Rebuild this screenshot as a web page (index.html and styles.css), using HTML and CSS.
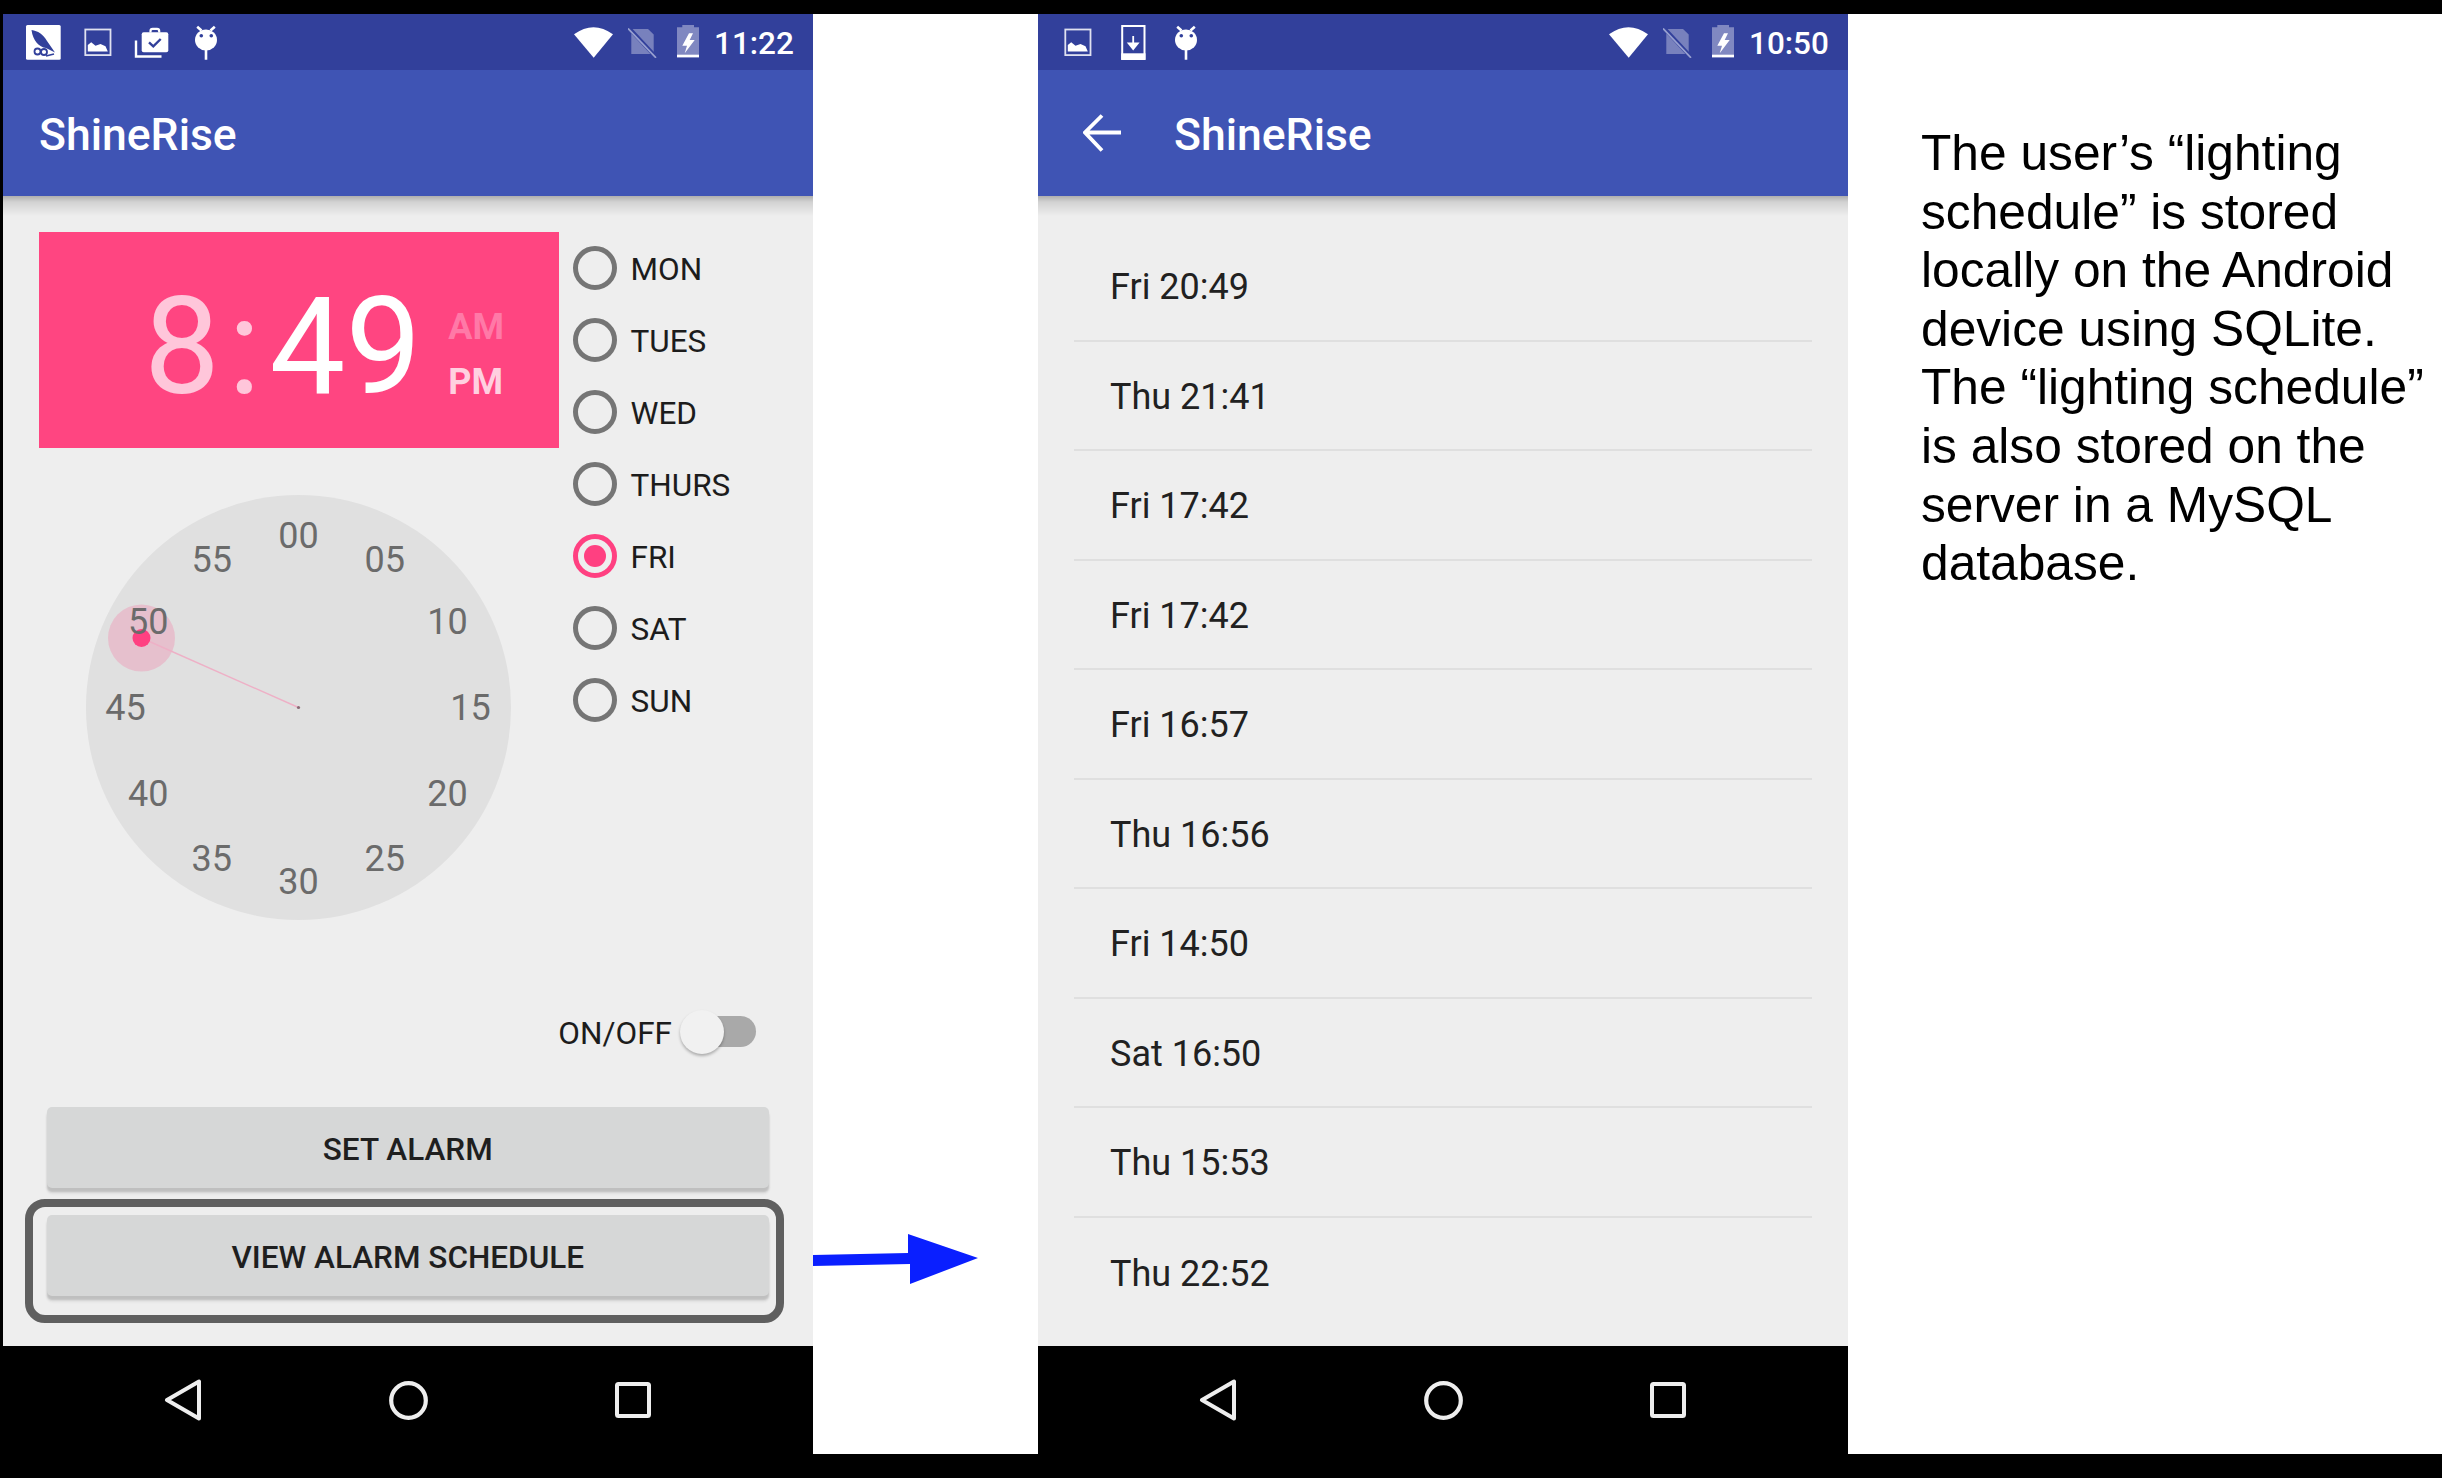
FILE: index.html
```html
<!DOCTYPE html>
<html lang="en">
<head>
<meta charset="utf-8">
<title>ShineRise</title>
<link rel="stylesheet" href="styles.css">
</head>
<body>
<main class="stage">
  <section class="phone">
    <header class="statusbar">
      <div class="notifs">
        <svg class="slot" viewBox="0 0 54.5 56"><rect x="10" y="11" width="34.7" height="34.7" rx="1.5" fill="#fff"/><path d="M15.5 16C22 17 27 20 31 27L39 38.5L30 34C23 33 17 27 15.5 16Z" fill="#32409b"/><path d="M38 40L30 42" stroke="#32409b" stroke-width="1.5"/><circle cx="21.5" cy="37.5" r="3" fill="#fff" stroke="#32409b" stroke-width="1.8"/><circle cx="28" cy="38" r="3" fill="#fff" stroke="#32409b" stroke-width="1.8"/></svg>
        <svg class="slot" viewBox="0 0 54.5 56"><rect x="14.3" y="15.5" width="25.2" height="25.6" fill="none" stroke="#dfe1f0" stroke-width="1.8"/><path d="M16.8 37.5V31L20.2 28.3L24.5 31.7L29.5 30L34.5 32.3L36.8 37.5Z" fill="#fff"/></svg>
        <svg class="slot" viewBox="0 0 54.5 56"><path d="M11 26.5V42.5H36.5" fill="none" stroke="#fff" stroke-width="2.4"/><path d="M25.5 18.5V17Q25.5 14.8 27.7 14.8H32Q34.2 14.8 34.2 17V18.5" fill="none" stroke="#fff" stroke-width="2.2"/><rect x="16.7" y="18.3" width="26.6" height="20" rx="2" fill="#fff"/><path d="M24 28.3L28.3 32.3L35.7 25" fill="none" stroke="#32409b" stroke-width="2.4"/></svg>
        <svg class="slot" viewBox="0 0 54.5 56"><path d="M17.2 12.7L21.5 16.5M34.8 12.7L30.5 16.5M26 35V45.7" stroke="#fff" stroke-width="2.6" fill="none"/><ellipse cx="26" cy="26" rx="11" ry="10.5" fill="#fff"/><circle cx="21.3" cy="21.8" r="1.8" fill="#32409b"/><circle cx="31.3" cy="21.8" r="1.8" fill="#32409b"/></svg>
      </div>
      <div class="sysicons">
        <svg class="wifi" viewBox="0 0 39 31"><path d="M0 7.3Q19.5-7 39 7.3L19.7 30.7Z" fill="#fff"/></svg>
        <svg class="sim" viewBox="0 0 29 30"><path d="M3.3 1H20L25.7 6.5V26H3.3Z" fill="#fff" opacity=".34"/><path d="M0 -1L28 29" stroke="#32409b" stroke-width="4"/><path d="M0 0.5L28 29.8" stroke="#98a0d0" stroke-width="1.8"/></svg>
        <svg class="battery" viewBox="0 0 22 33"><path d="M5.3 0H17V2.3H22V30H0V2.3H5.3Z" fill="#fff" opacity=".38"/><rect y="29.7" width="22" height="2.7" fill="#fff"/><path d="M12 8.3L5.3 20.7H10L7.7 28.3L17.7 15H12.7L16 8.3Z" fill="#fff"/></svg>
        <span class="clocktime">11:22</span>
      </div>
    </header>
    <div class="appbar"><h1 class="title">ShineRise</h1></div>
    <div class="content alarm">
      <div class="alarm-top">
        <div class="alarm-main">
          <div class="timebox">
            <span class="digit dim">8</span><span class="digit dim colon">:</span><span class="digit">49</span>
            <div class="ampm"><span class="am">AM</span><span class="pm">PM</span></div>
          </div>
          <svg class="dial" viewBox="0 0 425 425">
            <circle cx="212.5" cy="212.5" r="212.5" fill="#e0e0e0"/>
            <circle cx="55.5" cy="143" r="33.5" fill="#ff4081" opacity=".2"/>
            <line x1="212.5" y1="212.5" x2="55.5" y2="143" stroke="#eeb0c6" stroke-width="1.4"/>
            <circle cx="55.5" cy="143" r="9" fill="#ff4081"/>
            <circle cx="212.5" cy="212.5" r="1.6" fill="#8a6a75"/>
            <g class="dial-nums">
              <text x="212.5" y="53">00</text><text x="298.7" y="76.5">05</text><text x="361.5" y="138.5">10</text><text x="384.5" y="225.3">15</text><text x="361.5" y="311">20</text><text x="298.7" y="375.5">25</text><text x="212.5" y="398.8">30</text><text x="125.8" y="375.5">35</text><text x="62.3" y="311">40</text><text x="39.5" y="225.3">45</text><text x="62.3" y="138.5">50</text><text x="125.8" y="76.5">55</text>
            </g>
          </svg>
        </div>
        <ul class="days">
          <li class="day"><span class="radio"></span><span class="day-label">MON</span></li>
          <li class="day"><span class="radio"></span><span class="day-label">TUES</span></li>
          <li class="day"><span class="radio"></span><span class="day-label">WED</span></li>
          <li class="day"><span class="radio"></span><span class="day-label">THURS</span></li>
          <li class="day"><span class="radio on"></span><span class="day-label">FRI</span></li>
          <li class="day"><span class="radio"></span><span class="day-label">SAT</span></li>
          <li class="day"><span class="radio"></span><span class="day-label">SUN</span></li>
        </ul>
      </div>
      <div class="toggle-row"><span class="toggle-label">ON/OFF</span><span class="switch"><span class="thumb"></span></span></div>
      <div class="buttons">
        <button class="btn">SET ALARM</button>
        <div class="marked"><button class="btn">VIEW ALARM SCHEDULE</button></div>
      </div>
    </div>
    <nav class="navbar">
      <svg class="nav-back" viewBox="0 0 37 42"><path d="M35 2.5V39.5L3 21Z" fill="none" stroke="#eee" stroke-width="4" stroke-linejoin="round"/></svg>
      <svg class="nav-home" viewBox="0 0 39 39"><circle cx="19.5" cy="19.5" r="17.3" fill="none" stroke="#eee" stroke-width="4.2"/></svg>
      <svg class="nav-recent" viewBox="0 0 36 36"><rect x="2" y="2" width="32" height="32" rx="1.5" fill="none" stroke="#eee" stroke-width="4"/></svg>
    </nav>
  </section>

  <div class="gutter">
    <svg class="flow-arrow" viewBox="0 0 165 50"><path d="M0 21L95 19V0L165 24L97 50V30L0 32Z" fill="#0a1fff"/></svg>
  </div>

  <section class="phone">
    <header class="statusbar">
      <div class="notifs">
        <svg class="slot" viewBox="0 0 54.5 56"><rect x="14.3" y="15.5" width="25.2" height="25.6" fill="none" stroke="#dfe1f0" stroke-width="1.8"/><path d="M16.8 37.5V31L20.2 28.3L24.5 31.7L29.5 30L34.5 32.3L36.8 37.5Z" fill="#fff"/></svg>
        <svg class="slot" viewBox="0 0 54.5 56"><rect x="16.2" y="12" width="22.3" height="33" fill="none" stroke="#fff" stroke-width="2"/><rect x="15.2" y="39.3" width="24.3" height="6.4" fill="#fff"/><path d="M27.2 22V34M22.7 29.5L27.2 35L31.7 29.5Z" fill="#fff" stroke="#fff" stroke-width="1.8"/></svg>
        <svg class="slot" viewBox="0 0 54.5 56"><path d="M17.2 12.7L21.5 16.5M34.8 12.7L30.5 16.5M26 35V45.7" stroke="#fff" stroke-width="2.6" fill="none"/><ellipse cx="26" cy="26" rx="11" ry="10.5" fill="#fff"/><circle cx="21.3" cy="21.8" r="1.8" fill="#32409b"/><circle cx="31.3" cy="21.8" r="1.8" fill="#32409b"/></svg>
      </div>
      <div class="sysicons">
        <svg class="wifi" viewBox="0 0 39 31"><path d="M0 7.3Q19.5-7 39 7.3L19.7 30.7Z" fill="#fff"/></svg>
        <svg class="sim" viewBox="0 0 29 30"><path d="M3.3 1H20L25.7 6.5V26H3.3Z" fill="#fff" opacity=".34"/><path d="M0 -1L28 29" stroke="#32409b" stroke-width="4"/><path d="M0 0.5L28 29.8" stroke="#98a0d0" stroke-width="1.8"/></svg>
        <svg class="battery" viewBox="0 0 22 33"><path d="M5.3 0H17V2.3H22V30H0V2.3H5.3Z" fill="#fff" opacity=".38"/><rect y="29.7" width="22" height="2.7" fill="#fff"/><path d="M12 8.3L5.3 20.7H10L7.7 28.3L17.7 15H12.7L16 8.3Z" fill="#fff"/></svg>
        <span class="clocktime">10:50</span>
      </div>
    </header>
    <div class="appbar appbar-sub">
      <svg class="back" viewBox="0 0 38 38"><path d="M38 18.5H3M19 1.5L2 18.5L19 36.5" fill="none" stroke="#fff" stroke-width="3.8"/></svg>
      <h1 class="title">ShineRise</h1>
    </div>
    <div class="content schedule">
      <ul class="rows">
        <li class="row">Fri 20:49</li>
        <li class="row">Thu 21:41</li>
        <li class="row">Fri 17:42</li>
        <li class="row">Fri 17:42</li>
        <li class="row">Fri 16:57</li>
        <li class="row">Thu 16:56</li>
        <li class="row">Fri 14:50</li>
        <li class="row">Sat 16:50</li>
        <li class="row">Thu 15:53</li>
        <li class="row">Thu 22:52</li>
      </ul>
    </div>
    <nav class="navbar">
      <svg class="nav-back" viewBox="0 0 37 42"><path d="M35 2.5V39.5L3 21Z" fill="none" stroke="#eee" stroke-width="4" stroke-linejoin="round"/></svg>
      <svg class="nav-home" viewBox="0 0 39 39"><circle cx="19.5" cy="19.5" r="17.3" fill="none" stroke="#eee" stroke-width="4.2"/></svg>
      <svg class="nav-recent" viewBox="0 0 36 36"><rect x="2" y="2" width="32" height="32" rx="1.5" fill="none" stroke="#eee" stroke-width="4"/></svg>
    </nav>
  </section>

  <aside class="note">
    <p>The user’s “lighting<br>schedule” is stored<br>locally on the Android<br>device using SQLite.<br>The “lighting schedule”<br>is also stored on the<br>server in a MySQL<br>database.</p>
  </aside>
</main>
</body>
</html>
```
FILE: styles.css
```css
* { box-sizing: border-box; }
html, body { margin: 0; padding: 0; }
body {
  width: 2442px;
  height: 1478px;
  overflow: hidden;
  background: #000;
  font-family: Roboto, "Liberation Sans", sans-serif;
}
.stage {
  display: flex;
  height: 1440px;
  margin: 14px 0 24px 3px;
  background: #fff;
}
.phone {
  flex: 0 0 810px;
  display: flex;
  flex-direction: column;
  background: #eee;
}
.statusbar {
  flex: 0 0 56px;
  display: flex;
  justify-content: space-between;
  background: #32409b;
  padding: 0 23px 0 13px;
}
.notifs { display: flex; }
.slot { width: 54.5px; height: 56px; display: block; }
.sysicons { display: flex; align-items: flex-start; }
.wifi { width: 39px; height: 31px; margin: 13px 15px 0 0; }
.sim { width: 29px; height: 30px; margin: 14px 20px 0 0; }
.battery { width: 22px; height: 33px; margin: 11px 15px 0 0; }
.clocktime {
  color: #fff;
  font-size: 31.5px;
  font-weight: 500;
  line-height: 52px;
  width: 76px;
  padding-top: 4px;
  text-align: right;
  white-space: nowrap;
}
.appbar {
  position: relative;
  flex: 0 0 126px;
  display: flex;
  align-items: center;
  background: #3f54b4;
  padding-left: 36px;
}
.appbar-sub { padding-left: 37px; }
.appbar::after {
  content: "";
  position: absolute;
  left: 0;
  right: 0;
  top: 100%;
  height: 20px;
  background: linear-gradient(#aeaeae, #d2d2d2 30%, #eee);
}
.title {
  margin: 0;
  color: #fff;
  font-size: 44.5px;
  font-weight: 500;
  line-height: 1;
  padding-top: 5px;
}
.back { width: 38px; height: 38px; margin: 0 53px 0 8px; }
.content { flex: 1 1 auto; min-height: 0; overflow: hidden; }

.alarm { padding-top: 36px; }
.alarm-top { display: flex; }
.alarm-main { flex: 0 0 555.5px; padding-left: 36px; }
.timebox {
  display: flex;
  align-items: center;
  width: 519.5px;
  height: 216px;
  background: #ff4581;
  padding: 14px 0 0 105px;
  color: #fff;
}
.digit { font-size: 135px; line-height: 1; }
.dim { color: #ffc6da; }
.colon { margin: 0 9px 0 8px; }
.ampm {
  display: flex;
  flex-direction: column;
  gap: 13px;
  margin: 14px 0 0 27px;
  font-size: 36px;
  font-weight: 700;
  line-height: 42px;
}
.am { color: #ff79a7; }
.pm { color: #ffd0e0; }
.dial { display: block; width: 425px; height: 425px; margin: 47px 0 0 46.5px; }
.dial-nums text {
  font-family: Roboto, sans-serif;
  font-size: 36px;
  fill: #6b6b6b;
  text-anchor: middle;
}
.days { list-style: none; margin: 0; padding: 0 0 0 14px; }
.day {
  display: flex;
  align-items: center;
  gap: 14px;
  height: 72px;
  font-size: 31.5px;
  color: #1c1c1c;
}
.day-label { padding-top: 3px; }
.radio {
  position: relative;
  width: 44px;
  height: 44px;
  border: 5px solid #757575;
  border-radius: 50%;
}
.radio.on { border-color: #ff4081; }
.radio.on::after {
  content: "";
  position: absolute;
  inset: 6px;
  background: #ff4081;
  border-radius: 50%;
}
.toggle-row {
  display: flex;
  justify-content: flex-end;
  align-items: center;
  gap: 8px;
  height: 44px;
  margin-top: 89.5px;
  padding-right: 57px;
  font-size: 31.5px;
  color: #1c1c1c;
}
.toggle-label { padding-top: 3px; }
.switch {
  position: relative;
  width: 76px;
  height: 31px;
}
.switch::before {
  content: "";
  position: absolute;
  inset: 0 0 0 10px;
  background: #a9a9a9;
  border-radius: 16px;
}
.thumb {
  position: absolute;
  left: 0;
  top: -6.5px;
  width: 44px;
  height: 44px;
  border-radius: 50%;
  background: #f1f1f1;
  box-shadow: 0 2px 3px rgba(0, 0, 0, .28);
}
.buttons {
  display: flex;
  flex-direction: column;
  gap: 27px;
  margin-top: 53.5px;
  padding-left: 44px;
  width: 765.5px;
}
.btn {
  display: block;
  width: 100%;
  height: 81px;
  border: 0;
  border-radius: 5px;
  background: #d6d7d7;
  box-shadow: 0 4px 2px 0 #bfbfbf, 0 6px 3px rgba(0, 0, 0, .06);
  font-family: Roboto, sans-serif;
  font-size: 31.5px;
  font-weight: 500;
  color: #1f1f1f;
  padding: 3px 0 0;
}
.marked { position: relative; }
.marked::after {
  content: "";
  position: absolute;
  top: -16px;
  bottom: -27px;
  left: -22px;
  right: -15.5px;
  border: 8px solid #5f5f5f;
  border-radius: 20px;
}
.navbar {
  flex: 0 0 108px;
  display: flex;
  align-items: center;
  gap: 187.5px;
  padding-left: 161px;
  background: #000;
}
.nav-back { width: 37px; height: 42px; }
.nav-home { width: 39px; height: 39px; }
.nav-recent { width: 36px; height: 36px; }

.gutter { flex: 0 0 225px; padding-top: 1220px; }
.flow-arrow { display: block; width: 165px; height: 50px; }

.schedule { padding-top: 36px; }
.rows { list-style: none; margin: 0; padding: 0 36px; }
.row {
  display: flex;
  align-items: center;
  height: 109.5px;
  padding: 3px 0 0 36px;
  border-bottom: 2px solid #dfdfdf;
  font-size: 36px;
  color: #212121;
}
.row:last-child { border-bottom: 0; }

.note {
  flex: 1 1 auto;
  padding: 110px 0 0 73px;
  font-family: "Liberation Sans", Arial, sans-serif;
  font-size: 49.7px;
  line-height: 58.6px;
  color: #000;
}
.note p { margin: 0; white-space: nowrap; }
```
